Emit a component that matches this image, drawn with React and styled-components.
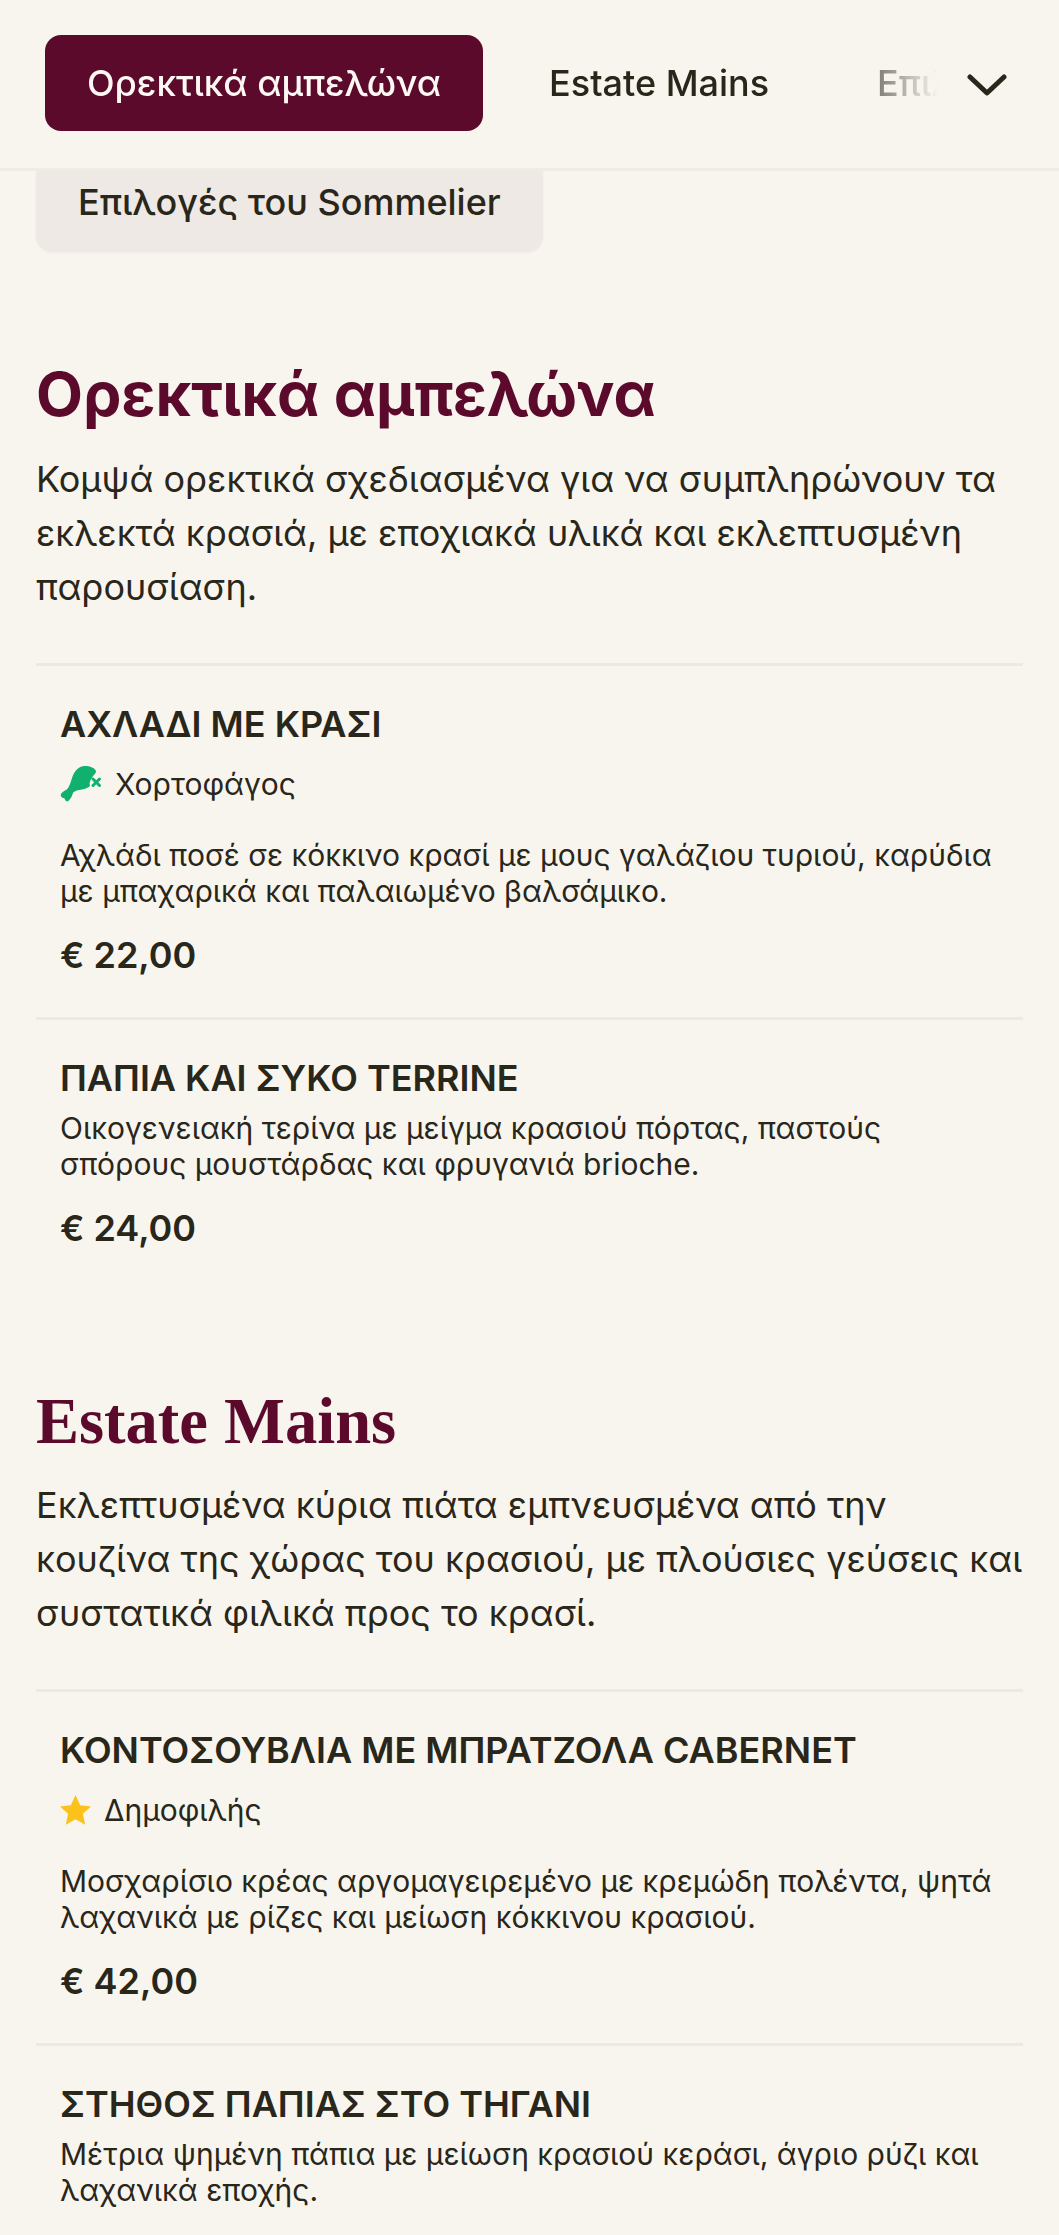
import React from 'react'
import styled, { createGlobalStyle } from 'styled-components'

const Global = createGlobalStyle`
  html, body { margin: 0; padding: 0; background: #f8f5ef; }
  body { font-family: Inter, "Noto Sans", sans-serif; color: #29261a; }
  * { box-sizing: border-box; }
`

const Page = styled.div`
  height: 2235px;
  overflow: hidden;
`

const Header = styled.header`
  display: flex;
  align-items: center;
  height: 171px;
  padding: 0 0 2px 45px;
  border-bottom: 3px solid #efece6;
`

const TabStrip = styled.nav`
  display: flex;
  gap: 24px;
  width: 895px;
  overflow: hidden;
  mask-image: linear-gradient(to right, #000 825px, rgba(0,0,0,.55) 835px, transparent 893px);
`

const Tab = styled.div`
  flex: none;
  height: 96px;
  display: flex;
  align-items: center;
  padding: 0 42px;
  border-radius: 16px;
  font-size: 36px;
  font-weight: 500;
  background: ${p => (p.$active ? '#5c0a2c' : 'transparent')};
  color: ${p => (p.$active ? '#fdf8f3' : '#29261a')};
`

const Chevron = styled.button`
  flex: none;
  width: 40px;
  margin: 3px 0 0 27px;
  padding: 0;
  border: 0;
  background: none;
  display: flex;
  color: #29261a;
`

const Content = styled.main`
  padding: 0 36px;
`

const Pill = styled.div`
  width: 507px;
  height: 81px;
  display: flex;
  align-items: center;
  padding: 0 42px 20px;
  border-radius: 0 0 16px 16px;
  background: #efe9e6;
  box-shadow: 0 1px 3px rgba(0, 0, 0, .04);
  font-size: 36px;
  font-weight: 500;
`

const Section = styled.section`
  padding-top: ${p => p.$top}px;
`

const Title = styled.h2`
  margin: 0;
  color: #5c0a2c;
  font-weight: 700;
  font-size: ${p => (p.$serif ? '64.5px' : '61px')};
  line-height: ${p => (p.$serif ? '75px' : '78px')};
  font-family: ${p => (p.$serif ? '"Liberation Serif", serif' : 'Inter, sans-serif')};
`

const Intro = styled.p`
  margin: 19px 0 49px;
  font-size: 36px;
  line-height: 54px;
`

const Item = styled.article`
  padding: 36px 24px 40px;
  border-top: 3px solid #ece9e2;
`

const Name = styled.h3`
  margin: 0;
  font-size: 36px;
  line-height: 44px;
  font-weight: 600;
`

const Tag = styled.div`
  display: flex;
  align-items: center;
  gap: ${p => p.$gap}px;
  margin-top: 20px;
  font-size: 30px;
  line-height: 36px;
`

const Text = styled.p`
  margin: ${p => (p.$tagged ? '36px' : '11px')} 0 0;
  font-size: 30px;
  line-height: 35.5px;
`

const Price = styled.div`
  margin-top: 24px;
  font-size: 36px;
  line-height: 44px;
  font-weight: 600;
`

const Drumstick = () => (
  <svg width="42" height="36" viewBox="0 0 42 36">
    <path
      fill="#10b06f"
      d="M25 0C30 0 35 2 36 5C36 8 33 9 32 12C30 14 29 17 30 20C28 22 25 23 22 23.500C18 24 14 25 13 27C12 29 12 31 10 33C9 35 7 36 6 35C5 34 5 33 4 32C2 32 0 30 1 28C2 26 4 25 6 24C9 22 10 18 12 12C14 6 18 0 25 0Z"
    />
    <path stroke="#10b06f" strokeWidth="3" strokeLinecap="round" d="M33 13l6.500 6.500M39.500 13L33 19.500" />
  </svg>
)

const Star = () => (
  <svg width="31" height="30" viewBox="0 0 32 31">
    <path fill="#fbc21a" d="M16 0l4.800 10.600 11.200 1.200-8.300 7.600 2.300 11.300L16 25l-10 5.700 2.300-11.300L0 11.800l11.200-1.200z" />
  </svg>
)

const sections = [
  {
    title: 'Ορεκτικά αμπελώνα',
    intro: 'Κομψά ορεκτικά σχεδιασμένα για να συμπληρώνουν τα εκλεκτά κρασιά, με εποχιακά υλικά και εκλεπτυσμένη παρουσίαση.',
    items: [
      {
        name: 'ΑΧΛΑΔΙ ΜΕ ΚΡΑΣΙ',
        tag: 'Χορτοφάγος',
        icon: <Drumstick />,
        gap: 13,
        text: 'Αχλάδι ποσέ σε κόκκινο κρασί με μους γαλάζιου τυριού, καρύδια με μπαχαρικά και παλαιωμένο βαλσάμικο.',
        price: '€ 22,00',
      },
      {
        name: 'ΠΑΠΙΑ ΚΑΙ ΣΥΚΟ TERRINE',
        text: 'Οικογενειακή τερίνα με μείγμα κρασιού πόρτας, παστούς σπόρους μουστάρδας και φρυγανιά brioche.',
        price: '€ 24,00',
      },
    ],
  },
  {
    serif: true,
    title: 'Estate Mains',
    intro: 'Εκλεπτυσμένα κύρια πιάτα εμπνευσμένα από την κουζίνα της χώρας του κρασιού, με πλούσιες γεύσεις και συστατικά φιλικά προς το κρασί.',
    items: [
      {
        name: 'ΚΟΝΤΟΣΟΥΒΛΙΑ ΜΕ ΜΠΡΑΤΖΟΛΑ CABERNET',
        tag: 'Δημοφιλής',
        icon: <Star />,
        gap: 13,
        text: 'Μοσχαρίσιο κρέας αργομαγειρεμένο με κρεμώδη πολέντα, ψητά λαχανικά με ρίζες και μείωση κόκκινου κρασιού.',
        price: '€ 42,00',
      },
      {
        name: 'ΣΤΗΘΟΣ ΠΑΠΙΑΣ ΣΤΟ ΤΗΓΑΝΙ',
        text: 'Μέτρια ψημένη πάπια με μείωση κρασιού κεράσι, άγριο ρύζι και λαχανικά εποχής.',
        price: '€ 38,00',
      },
    ],
  },
]

export default function App() {
  return (
    <Page>
      <Global />
      <Header>
        <TabStrip>
          <Tab $active>Ορεκτικά αμπελώνα</Tab>
          <Tab>Estate Mains</Tab>
          <Tab>Επιλογές του Sommelier</Tab>
        </TabStrip>
        <Chevron aria-label="more">
          <svg width="40" height="22" viewBox="0 0 40 22" fill="none">
            <path d="M3 3l17 16L37 3" stroke="currentColor" strokeWidth="5" strokeLinecap="round" strokeLinejoin="round" />
          </svg>
        </Chevron>
      </Header>
      <Content>
        <Pill>Επιλογές του Sommelier</Pill>
        {sections.map((section, i) => (
          <Section key={section.title} $top={i === 0 ? 103 : 94}>
            <Title $serif={section.serif}>{section.title}</Title>
            <Intro>{section.intro}</Intro>
            {section.items.map(item => (
              <Item key={item.name}>
                <Name>{item.name}</Name>
                {item.tag && <Tag $gap={item.gap}>{item.icon}{item.tag}</Tag>}
                <Text $tagged={!!item.tag}>{item.text}</Text>
                <Price>{item.price}</Price>
              </Item>
            ))}
          </Section>
        ))}
      </Content>
    </Page>
  )
}
